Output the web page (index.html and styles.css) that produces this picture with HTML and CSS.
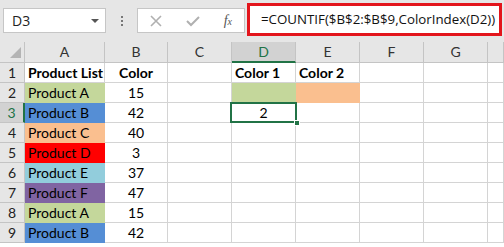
FILE: index.html
```html
<!DOCTYPE html>
<html lang="en">
<head>
  <meta charset="UTF-8">
  <link rel="stylesheet" href="styles.css">
  <title>ColorIndex count</title>
</head>
<body>
  <div class="toolbar">
    <div class="name-box">
      <span>D3</span>
      <span class="caret"></span>
    </div>
    <div class="grip"><i></i><i></i><i></i></div>
    <div class="fx-box">
      <svg width="12" height="12" viewBox="0 0 12 12"><path d="M1 1 L11 11 M11 1 L1 11" stroke="#b0b0b0" stroke-width="1.6" fill="none"/></svg>
      <svg width="14" height="12" viewBox="0 0 14 12"><path d="M1 6 L5 10 L13 2" stroke="#b0b0b0" stroke-width="2" fill="none"/></svg>
      <span class="fx">f<sub>x</sub></span>
    </div>
    <div class="formula">=COUNTIF($B$2:$B$9,ColorIndex(D2))</div>
  </div>

  <div class="sheet">
    <div class="hd corner"><span class="tri"></span></div>
    <div class="hd">A</div>
    <div class="hd">B</div>
    <div class="hd">C</div>
    <div class="hd active-col">D</div>
    <div class="hd">E</div>
    <div class="hd">F</div>
    <div class="hd">G</div>
    <div class="hd"></div>

    <div class="rh">1</div>
    <div class="c bold">Product List</div>
    <div class="c bold mid">Color</div>
    <div class="c"></div>
    <div class="c bold">Color 1</div>
    <div class="c bold">Color 2</div>
    <div class="c"></div><div class="c"></div><div class="c"></div>

    <div class="rh">2</div>
    <div class="c fill green">Product A</div>
    <div class="c mid">15</div>
    <div class="c"></div>
    <div class="c fill green"></div>
    <div class="c fill orange"></div>
    <div class="c"></div><div class="c"></div><div class="c"></div>

    <div class="rh active-row">3</div>
    <div class="c fill blue">Product B</div>
    <div class="c mid">42</div>
    <div class="c"></div>
    <div class="c mid selected">2<span class="handle"></span></div>
    <div class="c"></div>
    <div class="c"></div><div class="c"></div><div class="c"></div>

    <div class="rh">4</div>
    <div class="c fill orange">Product C</div>
    <div class="c mid">40</div>
    <div class="c"></div><div class="c"></div><div class="c"></div><div class="c"></div><div class="c"></div><div class="c"></div>

    <div class="rh">5</div>
    <div class="c fill red">Product D</div>
    <div class="c mid">3</div>
    <div class="c"></div><div class="c"></div><div class="c"></div><div class="c"></div><div class="c"></div><div class="c"></div>

    <div class="rh">6</div>
    <div class="c fill aqua">Product E</div>
    <div class="c mid">37</div>
    <div class="c"></div><div class="c"></div><div class="c"></div><div class="c"></div><div class="c"></div><div class="c"></div>

    <div class="rh">7</div>
    <div class="c fill purple">Product F</div>
    <div class="c mid">47</div>
    <div class="c"></div><div class="c"></div><div class="c"></div><div class="c"></div><div class="c"></div><div class="c"></div>

    <div class="rh">8</div>
    <div class="c fill green">Product A</div>
    <div class="c mid">15</div>
    <div class="c"></div><div class="c"></div><div class="c"></div><div class="c"></div><div class="c"></div><div class="c"></div>

    <div class="rh">9</div>
    <div class="c fill blue">Product B</div>
    <div class="c mid">42</div>
    <div class="c"></div><div class="c"></div><div class="c"></div><div class="c"></div><div class="c"></div><div class="c"></div>
  </div>
</body>
</html>
```

FILE: styles.css
```css
* {
  box-sizing: border-box;
}
html, body {
  margin: 0;
  padding: 0;
  width: 504px;
  height: 247px;
  overflow: hidden;
  background: #fff;
  font-family: "Lato", "Open Sans", sans-serif;
  color: #000;
}
.toolbar {
  display: flex;
  align-items: flex-start;
  height: 42px;
  padding-top: 3px;
  background: #e6e6e6;
}
.name-box {
  display: flex;
  align-items: center;
  justify-content: space-between;
  width: 103px;
  height: 25px;
  margin: 5px 0 0 3px;
  padding: 0 6px 0 8px;
  background: #fff;
  border: 1px solid #c6c6c6;
  font-family: "Open Sans", sans-serif;
  font-size: 14px;
  color: #222;
}
.caret {
  width: 0;
  height: 0;
  border-left: 4px solid transparent;
  border-right: 4px solid transparent;
  border-top: 4px solid #555;
}
.grip {
  display: flex;
  flex-direction: column;
  gap: 2px;
  width: 31px;
  margin-top: 13px;
  align-items: center;
}
.grip i {
  width: 2px;
  height: 2px;
  background: #777;
}
.fx-box {
  display: flex;
  align-items: center;
  justify-content: space-between;
  width: 108px;
  height: 25px;
  margin-top: 5px;
  padding: 0 12px 0 12px;
  background: #fff;
  border: 1px solid #c6c6c6;
}
.fx {
  font-family: "Liberation Serif", serif;
  font-style: italic;
  font-size: 14px;
  color: #555;
}
.fx sub {
  font-size: 10px;
  vertical-align: 0;
}
.formula {
  width: 255px;
  height: 33px;
  margin-left: 2px;
  padding: 0 0 0 11px;
  line-height: 27px;
  background: #fff;
  border: 3px solid #e3151c;
  font-family: "Open Sans", sans-serif;
  font-size: 13.3px;
  color: #111;
  white-space: nowrap;
  overflow: hidden;
}
.sheet {
  display: grid;
  grid-template-columns: 25px 80px 63px 64px 64px 64px 64px 64px 1fr;
  grid-template-rows: 21px repeat(9, 20px) 4px;
}
.hd, .rh, .c {
  border-right: 1px solid #d4d4d4;
  border-bottom: 1px solid #d4d4d4;
  font-size: 14px;
  line-height: 19px;
  white-space: nowrap;
}
.hd {
  background: #e6e6e6;
  border-color: #c4c4c4;
  text-align: center;
  color: #333;
  line-height: 20px;
}
.hd.active-col {
  background: #d2d2d2;
  color: #217346;
  border-bottom: 2px solid #217346;
}
.corner {
  position: relative;
}
.tri {
  position: absolute;
  right: 3px;
  bottom: 4px;
  width: 0;
  height: 0;
  border-left: 11px solid transparent;
  border-bottom: 11px solid #b4b4b4;
}
.rh {
  background: #e6e6e6;
  border-color: #c4c4c4;
  text-align: center;
  color: #222;
}
.rh.active-row {
  background: #d2d2d2;
  color: #217346;
  border-right: 2px solid #217346;
}
.c {
  padding-left: 3px;
}
.bold {
  font-weight: 700;
}
.mid {
  text-align: center;
  padding-left: 0;
}
.fill {
  border-color: transparent;
}
.green { background: #c4d79b; }
.orange { background: #fabf8f; }
.blue { background: #558ed5; }
.red { background: #ff0000; }
.aqua { background: #92cddc; }
.purple { background: #8064a2; }
.selected {
  position: relative;
}
.selected::after {
  content: "";
  position: absolute;
  left: -2px;
  top: -1px;
  right: -2px;
  bottom: -1px;
  border: 2px solid #217346;
}
.handle {
  position: absolute;
  right: -5px;
  bottom: -4px;
  width: 6px;
  height: 6px;
  background: #217346;
  border: 1px solid #fff;
  z-index: 1;
}
```
